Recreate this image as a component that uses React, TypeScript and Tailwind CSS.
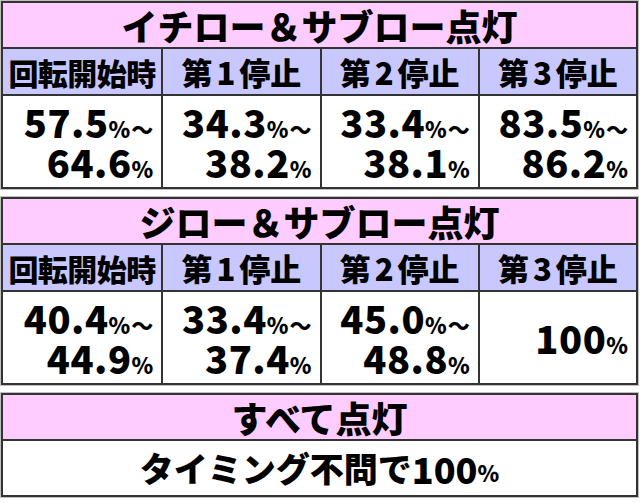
import React from "react";

const font = { fontFamily: '"Noto Sans CJK JP", "Noto Sans", sans-serif' };

type Val = { a: string; b?: string } | { single: string };

function Pct({ n, tilde }: { n: string; tilde?: boolean }) {
  return (
    <div className="flex items-baseline h-[40px] leading-none pt-[1px]">
      <span className="text-[38px] tracking-[0.5px] leading-none">{n}</span>
      <span className="text-[22px] leading-none">%</span>
      {tilde ? <span className="text-[22px] ml-[1px] leading-none">～</span> : null}
    </div>
  );
}

function DataCell({ v, first }: { v: Val; first: boolean }) {
  return (
    <div
      className={
        "flex flex-col items-end justify-center pr-[8px] font-black " +
        (first ? "" : "border-l-2 border-[#333]")
      }
    >
      {"single" in v ? (
        <Pct n={v.single} />
      ) : (
        <>
          <Pct n={v.a} tilde />
          <Pct n={v.b as string} />
        </>
      )}
    </div>
  );
}

function Header({ n }: { n: string }) {
  return (
    <div className="flex items-center justify-center font-black text-[31px] leading-none border-l-2 border-[#333]">
      <span>第</span>
      <span className="mx-[4px]">{n}</span>
      <span>停止</span>
    </div>
  );
}

function Table({ title, vals }: { title: string; vals: Val[] }) {
  return (
    <div className="border-2 border-[#333] shadow-[0_0_0_1px_#c0c0c0] bg-white">
      <div className="h-[46px] bg-[#ffccff] flex items-center justify-center text-[36px] leading-none font-black border-b-2 border-[#333]">
        {title}
      </div>
      <div className="grid grid-cols-4 h-[47px] bg-[#c8c8ff] border-b-2 border-[#333]">
        <div className="flex items-center justify-center font-black text-[30px] leading-none tracking-[-0.5px]">
          回転開始時
        </div>
        <Header n="1" />
        <Header n="2" />
        <Header n="3" />
      </div>
      <div className="grid grid-cols-4 h-[91px]">
        {vals.map((v, i) => (
          <DataCell key={i} v={v} first={i === 0} />
        ))}
      </div>
    </div>
  );
}

export default function App() {
  return (
    <div
      className="w-[640px] h-[503px] overflow-hidden bg-white text-black flex flex-col gap-[8px] pt-[1px] pl-[1px] pr-[2px]"
      style={font}
    >
      <Table
        title="イチロー＆サブロー点灯"
        vals={[
          { a: "57.5", b: "64.6" },
          { a: "34.3", b: "38.2" },
          { a: "33.4", b: "38.1" },
          { a: "83.5", b: "86.2" },
        ]}
      />
      <Table
        title="ジロー＆サブロー点灯"
        vals={[
          { a: "40.4", b: "44.9" },
          { a: "33.4", b: "37.4" },
          { a: "45.0", b: "48.8" },
          { single: "100" },
        ]}
      />
      <div className="border-2 border-[#333] shadow-[0_0_0_1px_#c0c0c0] bg-white">
        <div className="h-[46px] bg-[#ffccff] flex items-center justify-center text-[36px] leading-none font-black border-b-2 border-[#333]">
          すべて点灯
        </div>
        <div className="h-[54px] flex items-center justify-center font-black leading-none">
          <span className="text-[34px]">タイミング不問で</span>
          <span className="text-[36px]">100</span>
          <span className="text-[22px] self-end mb-[12px]">%</span>
        </div>
      </div>
    </div>
  );
}
